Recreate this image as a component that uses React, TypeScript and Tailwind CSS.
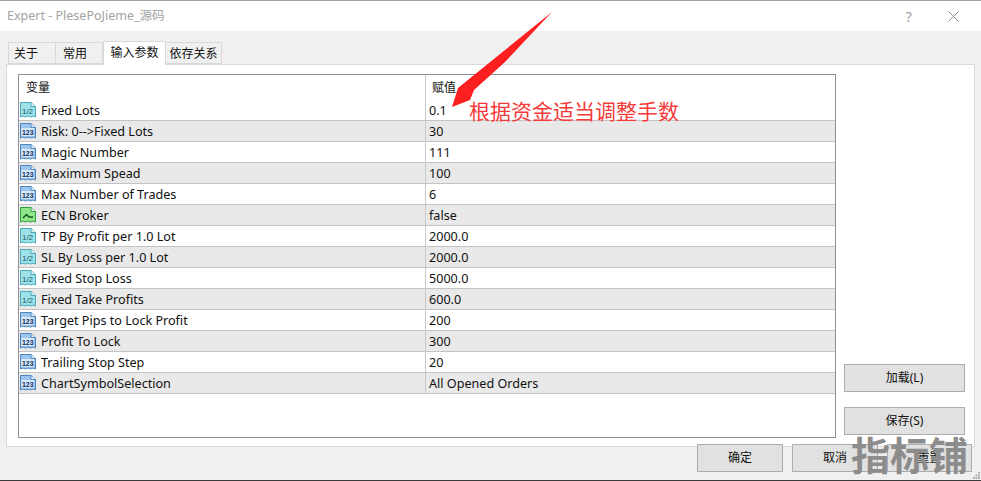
import React from 'react'

type IconKind = 'half' | 'int' | 'bool'

const rows: { icon: IconKind; name: string; value: string }[] = [
  { icon: 'half', name: 'Fixed Lots', value: '0.1' },
  { icon: 'int', name: 'Risk: 0-->Fixed Lots', value: '30' },
  { icon: 'int', name: 'Magic Number', value: '111' },
  { icon: 'int', name: 'Maximum Spead', value: '100' },
  { icon: 'int', name: 'Max Number of Trades', value: '6' },
  { icon: 'bool', name: 'ECN Broker', value: 'false' },
  { icon: 'half', name: 'TP By Profit per 1.0 Lot', value: '2000.0' },
  { icon: 'half', name: 'SL By Loss per 1.0 Lot', value: '2000.0' },
  { icon: 'half', name: 'Fixed Stop Loss', value: '5000.0' },
  { icon: 'half', name: 'Fixed Take Profits', value: '600.0' },
  { icon: 'int', name: 'Target Pips to Lock Profit', value: '200' },
  { icon: 'int', name: 'Profit To Lock', value: '300' },
  { icon: 'int', name: 'Trailing Stop Step', value: '20' },
  { icon: 'int', name: 'ChartSymbolSelection', value: 'All Opened Orders' },
]

const iconColors = {
  half: { fill: '#9fe3ea', stroke: '#49a9b8', text: '#17586a' },
  int: { fill: '#9cc6ee', stroke: '#4f86bf', text: '#0d2f63' },
  bool: { fill: '#8fe58a', stroke: '#35a03f', text: '#14591c' },
}

function ParamIcon({ kind }: { kind: IconKind }) {
  const c = iconColors[kind]
  return (
    <svg width="16" height="16" viewBox="0 0 16 16" className="shrink-0">
      <path d="M0.5 0.5H11L15.5 4.5V15L13 14L10.5 15L8 14L5.5 15L3 14L0.5 15Z" fill={c.fill} stroke={c.stroke} />
      <path d="M11 0.5V4.5H15.5" fill="#e8f4fa" stroke={c.stroke} />
      {kind === 'bool' ? (
        <path d="M3 11L6.5 7.5L9 10H13" fill="none" stroke={c.text} strokeWidth="1.5" />
      ) : kind === 'half' ? (
        <text x="7.5" y="11.5" textAnchor="middle" fontSize="8" fontFamily="'Liberation Sans Narrow', 'Liberation Sans', sans-serif" fill={c.text}>
          1/2
        </text>
      ) : (
        <>
          <rect x="1.5" y="5" width="12.5" height="8" fill="#ffffff" fillOpacity="0.6" />
          <text x="7.8" y="11.6" textAnchor="middle" fontSize="7" fontWeight="700" fontFamily="'Liberation Sans', sans-serif" fill={c.text}>
            123
          </text>
        </>
      )}
    </svg>
  )
}

function DialogButton({ label, className }: { label: string; className: string }) {
  return (
    <button className={`h-[28px] border border-[#adadad] bg-[#e1e1e1] text-[12px] text-[#111] ${className}`}>
      {label}
    </button>
  )
}

export default function App() {
  return (
    <div
      className="relative flex h-[481px] w-[981px] flex-col overflow-hidden bg-[#f0f0f0] text-[#111]"
      style={{ fontFamily: "'Noto Sans', 'Noto Sans CJK SC', sans-serif" }}
    >
      {/* Title bar */}
      <div className="flex h-[31px] shrink-0 items-center justify-between border-t border-[#a0a0a0] bg-white pl-[7px] pr-[22px] text-[12.5px] text-[#a3a3a3]">
        <span>Expert - PlesePoJieme_源码</span>
        <div className="flex items-center gap-[36px]">
          <span className="text-[15px] leading-none">?</span>
          <svg width="11" height="11" viewBox="0 0 11 11">
            <path d="M0.5 0.5L10.5 10.5M10.5 0.5L0.5 10.5" stroke="#8f8f8f" />
          </svg>
        </div>
      </div>

      {/* Tabs */}
      <div className="mt-[11px] flex h-[22px] shrink-0 items-end pl-[8px] text-[12px]">
        <div className="flex h-[22px] w-[48px] items-center border border-[#d9d9d9] pl-[5px] pt-[1px]">关于</div>
        <div className="flex h-[22px] w-[47px] items-center border border-l-0 border-[#d9d9d9] pl-[7px] pt-[1px]">常用</div>
        <div className="z-10 -mb-px flex h-[24px] w-[63px] items-center justify-center border border-b-0 border-[#d9d9d9] bg-white pb-[2px]">
          输入参数
        </div>
        <div className="flex h-[22px] w-[56px] items-center justify-center border border-l-0 border-[#d9d9d9] pt-[1px]">依存关系</div>
      </div>

      {/* Panel */}
      <div className="ml-[6px] flex h-[383px] w-[969px] shrink-0 gap-[8px] border border-[#d9d9d9] bg-white pl-[11px] pt-[9px]">
        <div className="h-[364px] w-[818px] shrink-0 border border-[#8f8f9a] bg-white">
          <div className="flex h-[25px] items-center text-[12px]">
            <div className="h-full w-[406px] pl-[7px] leading-[25px]">变量</div>
            <div className="h-full border-l border-[#c8c8c8] pl-[6px] leading-[25px]">赋值</div>
          </div>
          {rows.map((row, i) => (
            <div
              key={row.name}
              className={`flex h-[21px] border-b border-[#c4c4c4] text-[12.6px] leading-[22px] ${i % 2 === 1 ? 'bg-[#e9e9e9]' : 'bg-white'}`}
            >
              <div className="flex w-[406px] items-start gap-[5px] pl-[1px] pt-[2px]">
                <ParamIcon kind={row.icon} />
                <span className="-mt-[2px]">{row.name}</span>
              </div>
              <div className="border-l border-[#c8c8c8] pl-[3px]">{row.value}</div>
            </div>
          ))}
        </div>
        <div className="flex w-[121px] flex-col gap-[15px] pt-[290px]">
          <DialogButton label="加载(L)" className="w-full" />
          <DialogButton label="保存(S)" className="w-full" />
        </div>
      </div>

      {/* Bottom buttons */}
      <div className="-mt-[3px] flex gap-[9px] pl-[697px]">
        <DialogButton label="确定" className="w-[86px]" />
        <DialogButton label="取消" className="w-[86px]" />
        <DialogButton label="重置" className="w-[85px]" />
      </div>

      {/* Window bottom edge */}
      <div className="absolute inset-x-0 bottom-0 h-px bg-[#3a3a3a]" />

      {/* Resize grip */}
      <svg width="7" height="7" viewBox="0 0 7 7" className="absolute left-[973px] top-[472px]">
        <path d="M5 0h2v2H5zM2.500 2.500h2v2h-2zM5 2.500h2v2H5zM0 5h2v2H0zM2.500 5h2v2h-2zM5 5h2v2H5z" fill="#b5b5b5" />
      </svg>

      {/* Red arrow annotation */}
      <svg width="110" height="100" viewBox="0 0 110 100" className="absolute left-[448px] top-[10px]">
        <path d="M104 2L10 78L4 97L22 90L26 80L57 52Z" fill="#fb1f1f" />
      </svg>
      <span className="absolute left-[469px] top-[96px] text-[21px] leading-[30px] text-[#f63a3a]">根据资金适当调整手数</span>

      {/* Watermark */}
      <span className="absolute left-[851px] top-[434px] text-[39px] font-bold leading-[42px] text-[#8c8c8c]">指标铺</span>
    </div>
  )
}
